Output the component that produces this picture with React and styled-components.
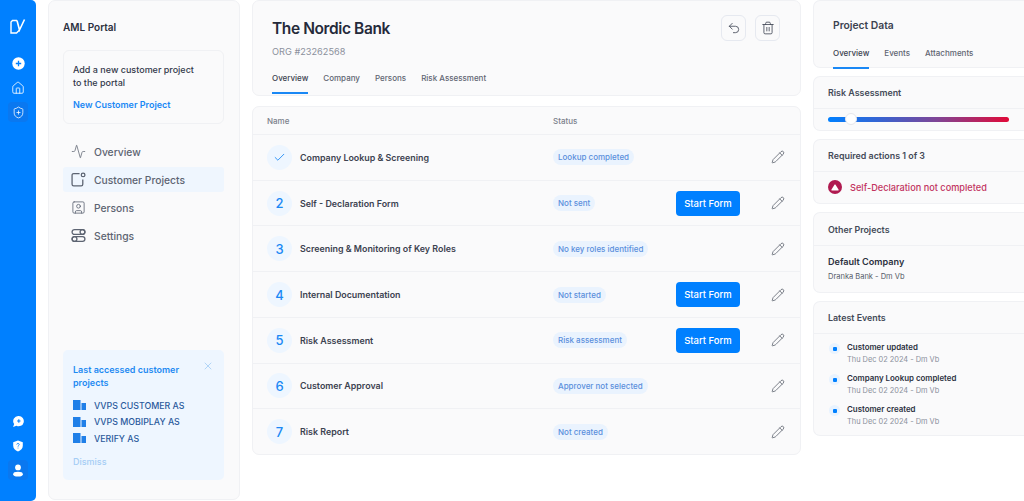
import React from "react";
import styled, { createGlobalStyle } from "styled-components";
import { Activity, Check, House, Pencil, ShieldPlus, SquareUser, Trash2, Undo2, X } from "lucide-react";

const GlobalStyle = createGlobalStyle`
  html, body {
    margin: 0;
    padding: 0;
    background: #ffffff;
    font-family: "Inter", "Liberation Sans", sans-serif;
    color: #2b3040;
  }
  * { box-sizing: border-box; }
`;

const Page = styled.div`
  width: 1024px;
  height: 501px;
  display: flex;
  overflow: hidden;
  background: #ffffff;
`;

const Rail = styled.nav`
  width: 36px;
  height: 501px;
  flex: none;
  background: #0080ff;
  border-radius: 0 5px 5px 0;
  display: flex;
  flex-direction: column;
  align-items: center;
  padding: 18px 0 21px;
  color: #ffffff;
`;

const RailGroup = styled.div`
  display: flex;
  flex-direction: column;
  align-items: center;
  gap: 4.5px;
  margin-top: ${(p) => p.$top || 0};
`;

const RailButton = styled.div`
  width: 20px;
  height: 20px;
  border-radius: 4px;
  display: flex;
  align-items: center;
  justify-content: center;
  background: ${(p) => (p.$active ? "#0a78f0" : "transparent")};
`;

const Panel = styled.section`
  background: #fafafb;
  border: 1px solid #f0f1f4;
  border-radius: 7px;
`;

const Sidebar = styled(Panel)`
  width: 192px;
  height: 500px;
  flex: none;
  margin-left: 12px;
  padding: 0 15px 19px 14px;
  display: flex;
  flex-direction: column;
`;

const SideTitle = styled.h2`
  margin: 19px 0 0;
  font-size: 10px;
  line-height: 15px;
  font-weight: 600;
  color: #2b3040;
`;

const AddCard = styled.div`
  margin-top: 15px;
  height: 74px;
  padding: 12px 9px 0;
  border: 1px solid #f0f1f4;
  border-radius: 6px;
`;

const AddText = styled.p`
  margin: 0;
  font-size: 9px;
  line-height: 13px;
  font-weight: 500;
  color: #33384a;
`;

const BlueLink = styled.a`
  display: block;
  margin-top: 9px;
  font-size: 9px;
  line-height: 13px;
  font-weight: 600;
  color: #1a88f5;
`;

const NavList = styled.div`
  margin-top: 15px;
  display: flex;
  flex-direction: column;
  gap: 3px;
`;

const NavItem = styled.div`
  height: 25px;
  border-radius: 3px;
  display: flex;
  align-items: center;
  gap: 8px;
  padding-left: 8px;
  font-size: 10.3px;
  font-weight: 500;
  color: #5d6472;
  background: ${(p) => (p.$active ? "#eff6fe" : "transparent")};
`;

const RecentCard = styled.div`
  position: relative;
  margin-top: auto;
  height: 130px;
  padding: 13px 10px 0;
  background: #eef6ff;
  border-radius: 5px;
`;

const RecentTitle = styled.div`
  width: 125px;
  font-size: 9px;
  line-height: 13px;
  font-weight: 600;
  color: #1f8af2;
`;

const RecentList = styled.div`
  margin-top: 9px;
  display: flex;
  flex-direction: column;
  gap: 2.5px;
`;

const RecentRow = styled.div`
  height: 14px;
  display: flex;
  align-items: center;
  gap: 8px;
  font-size: 8.8px;
  font-weight: 500;
  color: #2a5a9c;
`;

const DismissLink = styled.div`
  margin-top: 11px;
  font-size: 9px;
  font-weight: 500;
  color: #a5cdf5;
`;

const CloseButton = styled.div`
  position: absolute;
  top: 10px;
  right: 10px;
  color: #8fc2f3;
  display: flex;
`;

const Main = styled.main`
  width: 549px;
  flex: none;
  margin-left: 12px;
  display: flex;
  flex-direction: column;
  gap: 10px;
`;

const Header = styled(Panel)`
  height: 96px;
  padding: 0 20px 0 19px;
`;

const HeaderTop = styled.div`
  display: flex;
  justify-content: space-between;
  padding-top: 14px;
`;

const BankName = styled.h1`
  margin: 3px 0 0;
  font-size: 15.5px;
  line-height: 22px;
  font-weight: 600;
  letter-spacing: -0.4px;
  color: #252a3a;
`;

const OrgLine = styled.div`
  margin-top: 5px;
  font-size: 9.2px;
  line-height: 13px;
  color: #8b909b;
`;

const Actions = styled.div`
  display: flex;
  gap: 9px;
`;

const ActionButton = styled.button`
  width: 25px;
  height: 26px;
  padding: 0;
  background: #fafafb;
  border: 1px solid #e6e9f0;
  border-radius: 6px;
  display: flex;
  align-items: center;
  justify-content: center;
  color: #3f4553;
`;

const Tabs = styled.div`
  display: flex;
  gap: ${(p) => p.$gap};
  margin-top: ${(p) => p.$top};
`;

const Tab = styled.div`
  font-size: 8px;
  line-height: 12px;
  font-weight: 500;
  padding-bottom: ${(p) => p.$pad};
  color: ${(p) => (p.$active ? "#3c4250" : "#5f6572")};
  border-bottom: 2px solid ${(p) => (p.$active ? "#1a88f5" : "transparent")};
`;

const Table = styled(Panel)`
  height: 349px;
  display: flex;
  flex-direction: column;
`;

const TableHead = styled.div`
  height: 27px;
  flex: none;
  display: grid;
  grid-template-columns: 286px 1fr;
  align-items: center;
  padding-left: 14px;
  font-size: 8px;
  font-weight: 500;
  color: #7b808b;
`;

const Row = styled.div`
  flex: 1;
  display: grid;
  grid-template-columns: 286px 123px 64px 1fr;
  align-items: center;
  padding-left: 14px;
  border-top: 1px solid #f0f1f4;
`;

const StepCell = styled.div`
  display: flex;
  align-items: center;
  gap: 8px;
  font-size: 8.9px;
  font-weight: 600;
  color: #3c4250;
`;

const StepCircle = styled.div`
  width: 25px;
  height: 25px;
  border-radius: 50%;
  background: #eef6ff;
  color: #1a88f5;
  font-size: 13px;
  font-weight: 500;
  display: flex;
  align-items: center;
  justify-content: center;
`;

const StatusCell = styled.div`
  display: flex;
`;

const StatusPill = styled.span`
  height: 16px;
  padding: 0 5px;
  border-radius: 8px;
  background: #eaf3fe;
  color: #5a8fdc;
  font-size: 8px;
  font-weight: 500;
  line-height: 16px;
`;

const StartButton = styled.button`
  width: 64px;
  height: 25px;
  padding: 0;
  border: none;
  border-radius: 4px;
  background: #0080ff;
  color: #ffffff;
  font-family: inherit;
  font-size: 9.5px;
  font-weight: 500;
`;

const EditCell = styled.div`
  grid-column: 4;
  display: flex;
  padding-left: 31px;
  color: #5f6470;
`;

const Aside = styled.aside`
  width: 211px;
  flex: none;
  margin-left: 12px;
  display: flex;
  flex-direction: column;
  gap: 8px;
`;

const ProjectCard = styled(Panel)`
  height: 68px;
  padding: 17px 19px 0;
  border-right: none;
  border-radius: 7px 0 0 7px;
`;

const ProjectTitle = styled.h3`
  margin: 0;
  font-size: 10.3px;
  line-height: 14px;
  font-weight: 600;
  color: #3c4250;
`;

const SideCard = styled(Panel)`
  height: ${(p) => p.$h};
  border-right: none;
  border-radius: 7px 0 0 7px;
`;

const CardHead = styled.div`
  height: ${(p) => p.$h || "32px"};
  padding-left: 14px;
  display: flex;
  align-items: center;
  font-size: 8.9px;
  font-weight: 600;
  color: #444a58;
  border-bottom: 1px solid #f0f1f4;
`;

const RiskBody = styled.div`
  padding: 8px 14px 0;
`;

const RiskBar = styled.div`
  position: relative;
  width: 181px;
  height: 5px;
  border-radius: 3px;
  background: linear-gradient(90deg, #0080ff 0%, #3a62cf 30%, #7f4596 60%, #e10a38 100%);
`;

const RiskKnob = styled.div`
  position: absolute;
  left: 17px;
  top: -4px;
  width: 12px;
  height: 12px;
  border-radius: 50%;
  background: #ffffff;
  border: 1px solid #e6e7ec;
`;

const AlertRow = styled.div`
  height: 30px;
  padding-left: 14px;
  display: flex;
  align-items: center;
  gap: 8px;
  font-size: 9.2px;
  font-weight: 500;
  color: #c2345f;
`;

const AlertBadge = styled.div`
  width: 14px;
  height: 14px;
  border-radius: 50%;
  background: #b01a50;
  display: flex;
  align-items: center;
  justify-content: center;
`;

const OtherBody = styled.div`
  padding: 9px 14px 0;
`;

const OtherName = styled.div`
  font-size: 9.1px;
  line-height: 13px;
  font-weight: 600;
  color: #2b3040;
`;

const OtherSub = styled.div`
  margin-top: 3px;
  font-size: 7.5px;
  line-height: 11px;
  color: #555b68;
`;

const EventList = styled.div`
  padding: 7px 15px 0 14px;
  display: flex;
  flex-direction: column;
  gap: 5px;
`;

const EventRow = styled.div`
  display: flex;
  gap: 7px;
  height: 26px;
`;

const EventDot = styled.div`
  width: 11px;
  height: 11px;
  margin: 2px 0 0 1px;
  border-radius: 50%;
  background: #e8f3ff;
  display: flex;
  align-items: center;
  justify-content: center;
  &::after {
    content: "";
    width: 4px;
    height: 4px;
    border-radius: 1px;
    background: #0080ff;
  }
`;

const EventName = styled.div`
  font-size: 7.9px;
  line-height: 13px;
  font-weight: 600;
  color: #2b3040;
`;

const EventDate = styled.div`
  font-size: 7.4px;
  line-height: 12px;
  color: #8b909b;
`;

function LogoIcon() {
  return (
    <svg width="16" height="16" viewBox="0 0 16 16" fill="none" stroke="#fff" strokeWidth="1.4">
      <path d="M7 2.500H2.500L1 4v11h5.500L9.500 12" />
      <path d="M7 2.500l2.500 9.500L14.500 1.500" strokeWidth="1.600" />
    </svg>
  );
}

function PlusDisc() {
  return (
    <svg width="13" height="13" viewBox="0 0 13 13">
      <circle cx="6.500" cy="6.500" r="6.200" fill="#fff" />
      <path d="M6.500 3.800v5.400M3.800 6.500h5.400" stroke="#0080ff" strokeWidth="1.300" />
    </svg>
  );
}

function ChatPlus() {
  return (
    <svg width="13" height="13" viewBox="0 0 12 12">
      <path d="M6.300 1a4.700 4.700 0 1 1-2.200 8.900L1 11l1-2.600A4.700 4.700 0 0 1 6.300 1z" fill="#fff" />
      <path d="M6.300 4v3.200M4.700 5.600h3.200" stroke="#0080ff" strokeWidth="1" />
    </svg>
  );
}

function ShieldHelp() {
  return (
    <svg width="12" height="12" viewBox="0 0 12 12">
      <path d="M6 .6l4.800 1.600v3.600c0 2.800-2 4.700-4.800 5.600C3.200 10.500 1.200 8.600 1.200 5.800V2.200z" fill="#fff" />
      <path d="M4.800 4.500a1.200 1.200 0 1 1 1.800 1.100c-.4.200-.6.500-.6.900M6 7.700v.7" stroke="#0080ff" strokeWidth=".9" fill="none" />
    </svg>
  );
}

function UserFill() {
  return (
    <svg width="12" height="13" viewBox="0 0 12 13" fill="#fff">
      <circle cx="6" cy="3.400" r="2.900" />
      <ellipse cx="6" cy="10.200" rx="4.800" ry="2.400" />
    </svg>
  );
}

function ProjectIcon() {
  return (
    <svg width="15" height="15" viewBox="0 0 14 14" fill="none" stroke="#5d6472" strokeWidth="1.200">
      <path d="M8 1.500H2.500a1.500 1.500 0 0 0-1.500 1.500v8.500A1.500 1.500 0 0 0 2.500 13h7a1.500 1.500 0 0 0 1.500-1.500V7" />
      <circle cx="11.300" cy="2.700" r="1.700" />
    </svg>
  );
}

function SettingsIcon() {
  return (
    <svg width="15" height="15" viewBox="0 0 14 14" fill="none" stroke="#5d6472" strokeWidth="1.200">
      <rect x="1" y="1.500" width="12" height="4.500" rx="2.250" />
      <circle cx="10.700" cy="3.750" r="2.250" />
      <rect x="1" y="8" width="12" height="4.500" rx="2.250" />
      <circle cx="3.300" cy="10.250" r="2.250" />
    </svg>
  );
}

function CompanyIcon() {
  return (
    <svg width="13" height="10" viewBox="0 0 13 10" fill="#1f7fe8">
      <rect x="0" y="0" width="7.500" height="10" />
      <rect x="8.500" y="3" width="4.500" height="7" />
    </svg>
  );
}

function WarningIcon() {
  return (
    <svg width="8" height="7" viewBox="0 0 8 7" fill="#fff">
      <path d="M4 .5c.3 0 .5.100.7.400l2.800 4.500c.3.500 0 1.100-.6 1.100H1.100c-.6 0-.9-.6-.6-1.100L3.300.9C3.500.6 3.700.5 4 .5z" />
    </svg>
  );
}

const steps = [
  { mark: "check", name: "Company Lookup & Screening", status: "Lookup completed" },
  { mark: "2", name: "Self - Declaration Form", status: "Not sent", form: true },
  { mark: "3", name: "Screening & Monitoring of Key Roles", status: "No key roles identified" },
  { mark: "4", name: "Internal Documentation", status: "Not started", form: true },
  { mark: "5", name: "Risk Assessment", status: "Risk assessment", form: true },
  { mark: "6", name: "Customer Approval", status: "Approver not selected" },
  { mark: "7", name: "Risk Report", status: "Not created" },
];

const events = ["Customer updated", "Company Lookup completed", "Customer created"];
const recent = ["VVPS CUSTOMER AS", "VVPS MOBIPLAY AS", "VERIFY AS"];

function App() {
  return (
    <Page>
      <GlobalStyle />
      <Rail>
        <LogoIcon />
        <RailGroup $top="19px">
          <RailButton><PlusDisc /></RailButton>
          <RailButton><House size={14} strokeWidth={1.4} /></RailButton>
          <RailButton $active><ShieldPlus size={13} strokeWidth={1.4} /></RailButton>
        </RailGroup>
        <RailGroup $top="auto">
          <RailButton><ChatPlus /></RailButton>
          <RailButton><ShieldHelp /></RailButton>
          <RailButton $active><UserFill /></RailButton>
        </RailGroup>
      </Rail>

      <Sidebar>
        <SideTitle>AML Portal</SideTitle>
        <AddCard>
          <AddText>Add a new customer project<br />to the portal</AddText>
          <BlueLink>New Customer Project</BlueLink>
        </AddCard>
        <NavList>
          <NavItem><Activity size={15} strokeWidth={1.2} />Overview</NavItem>
          <NavItem $active><ProjectIcon />Customer Projects</NavItem>
          <NavItem><SquareUser size={15} strokeWidth={1.3} />Persons</NavItem>
          <NavItem><SettingsIcon />Settings</NavItem>
        </NavList>
        <RecentCard>
          <CloseButton><X size={12} strokeWidth={1.3} /></CloseButton>
          <RecentTitle>Last accessed customer projects</RecentTitle>
          <RecentList>
            {recent.map((name) => (
              <RecentRow key={name}><CompanyIcon />{name}</RecentRow>
            ))}
          </RecentList>
          <DismissLink>Dismiss</DismissLink>
        </RecentCard>
      </Sidebar>

      <Main>
        <Header>
          <HeaderTop>
            <div>
              <BankName>The Nordic Bank</BankName>
              <OrgLine>ORG #23262568</OrgLine>
            </div>
            <Actions>
              <ActionButton><Undo2 size={14} strokeWidth={1.4} /></ActionButton>
              <ActionButton><Trash2 size={14} strokeWidth={1.4} /></ActionButton>
            </Actions>
          </HeaderTop>
          <Tabs $gap="15px" $top="14px">
            <Tab $active $pad="8px">Overview</Tab>
            <Tab $pad="8px">Company</Tab>
            <Tab $pad="8px">Persons</Tab>
            <Tab $pad="8px">Risk Assessment</Tab>
          </Tabs>
        </Header>
        <Table>
          <TableHead>
            <span>Name</span>
            <span>Status</span>
          </TableHead>
          {steps.map((step) => (
            <Row key={step.name}>
              <StepCell>
                <StepCircle>
                  {step.mark === "check" ? <Check size={13} strokeWidth={1.6} /> : step.mark}
                </StepCircle>
                {step.name}
              </StepCell>
              <StatusCell><StatusPill>{step.status}</StatusPill></StatusCell>
              {step.form && <StartButton>Start Form</StartButton>}
              <EditCell><Pencil size={14} strokeWidth={1.4} /></EditCell>
            </Row>
          ))}
        </Table>
      </Main>

      <Aside>
        <ProjectCard>
          <ProjectTitle>Project Data</ProjectTitle>
          <Tabs $gap="15px" $top="15px">
            <Tab $active $pad="8px">Overview</Tab>
            <Tab $pad="8px">Events</Tab>
            <Tab $pad="8px">Attachments</Tab>
          </Tabs>
        </ProjectCard>
        <SideCard $h="55px">
          <CardHead>Risk Assessment</CardHead>
          <RiskBody>
            <RiskBar><RiskKnob /></RiskBar>
          </RiskBody>
        </SideCard>
        <SideCard $h="65px">
          <CardHead>Required actions 1 of 3</CardHead>
          <AlertRow>
            <AlertBadge><WarningIcon /></AlertBadge>
            Self-Declaration not completed
          </AlertRow>
        </SideCard>
        <SideCard $h="81px">
          <CardHead $h="33px">Other Projects</CardHead>
          <OtherBody>
            <OtherName>Default Company</OtherName>
            <OtherSub>Dranka Bank - Dm Vb</OtherSub>
          </OtherBody>
        </SideCard>
        <SideCard $h="135px">
          <CardHead>Latest Events</CardHead>
          <EventList>
            {events.map((name) => (
              <EventRow key={name}>
                <EventDot />
                <div>
                  <EventName>{name}</EventName>
                  <EventDate>Thu Dec 02 2024 - Dm Vb</EventDate>
                </div>
              </EventRow>
            ))}
          </EventList>
        </SideCard>
      </Aside>
    </Page>
  );
}

export default App;
